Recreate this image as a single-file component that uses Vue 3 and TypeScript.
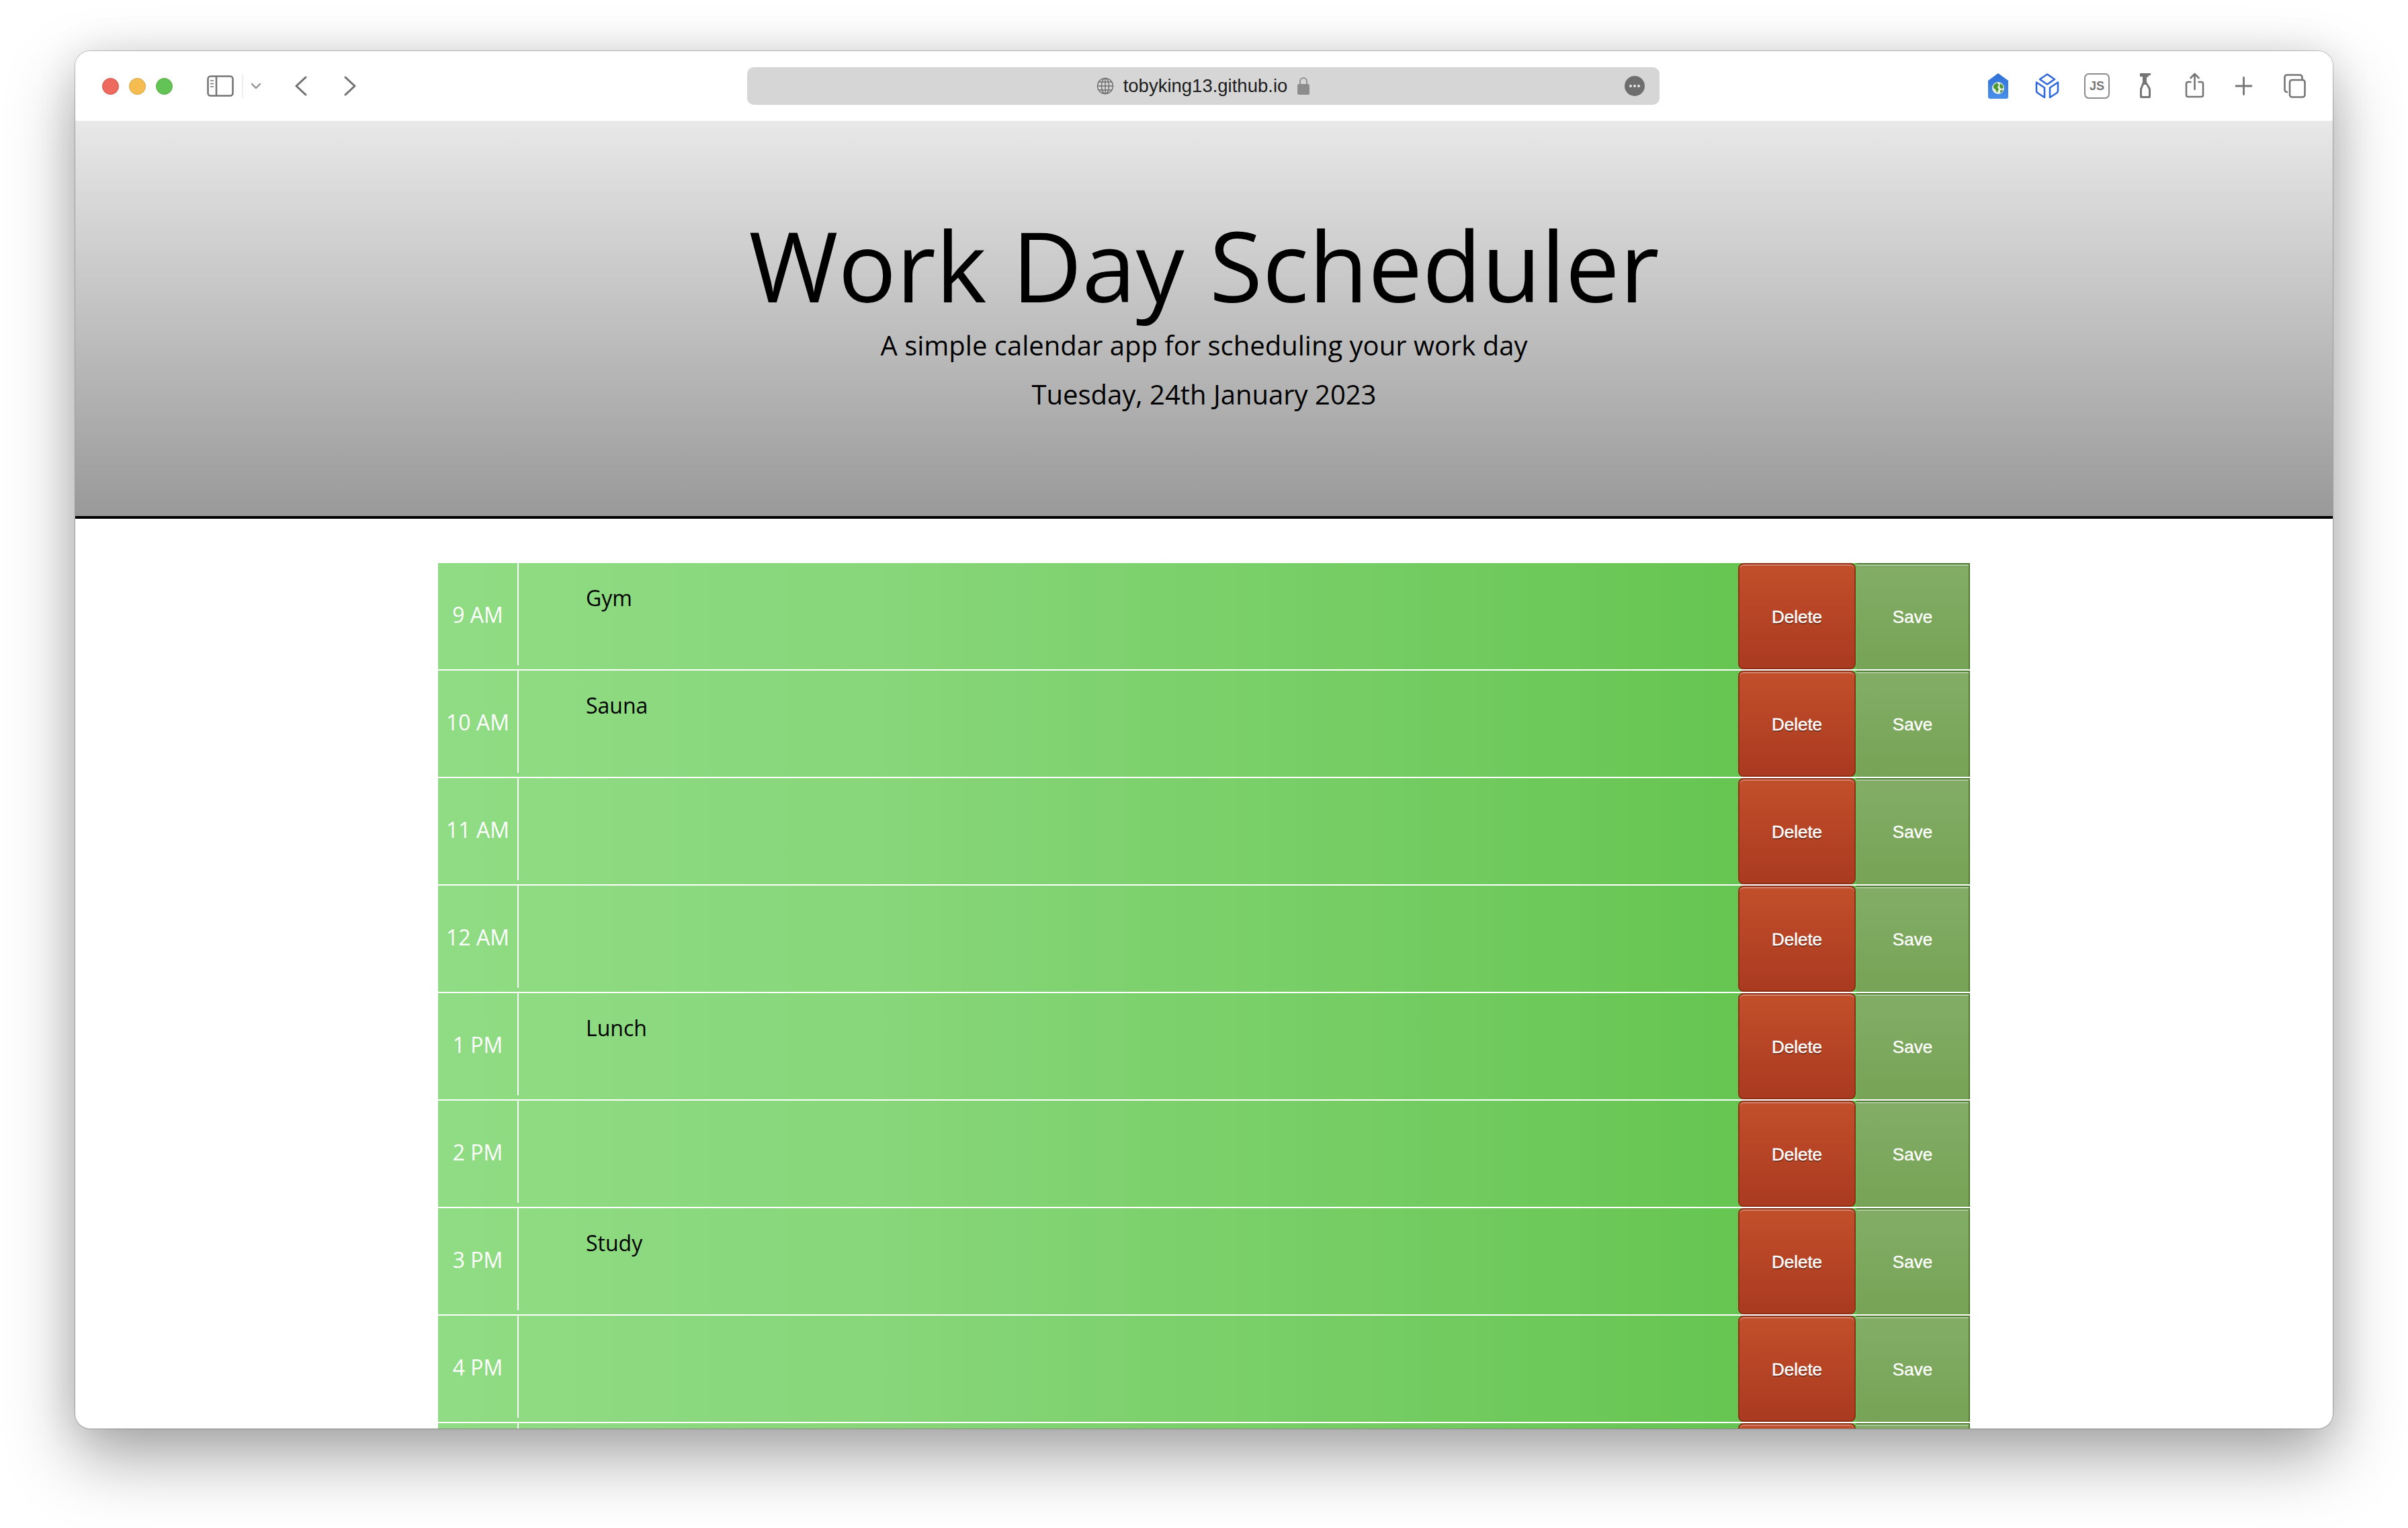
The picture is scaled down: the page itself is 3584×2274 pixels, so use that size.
<template>
  <div class="window">
    <div class="toolbar">
      <div class="tools-left">
        <span class="light red"></span>
        <span class="light yellow"></span>
        <span class="light green"></span>
        <svg class="ico sidebar" width="40" height="32" viewBox="0 0 40 32" fill="none" stroke="#757575" stroke-width="2.6">
          <rect x="1.5" y="1.5" width="37" height="29" rx="4" />
          <path d="M14 1.5v29" />
          <path d="M5 8h5M5 12.5h5M5 17h5" stroke-width="1.6" />
        </svg>
        <span class="divider"></span>
        <svg class="ico chevron" width="16" height="10" viewBox="0 0 16 10" fill="none" stroke="#8e8e93" stroke-width="2.4" stroke-linecap="round" stroke-linejoin="round">
          <path d="M2 2l6 6 6-6" />
        </svg>
        <svg class="ico back" width="18" height="30" viewBox="0 0 18 30" fill="none" stroke="#6f6f6f" stroke-width="3" stroke-linecap="round" stroke-linejoin="round">
          <path d="M16 2L2 15l14 13" />
        </svg>
        <svg class="ico forward" width="18" height="30" viewBox="0 0 18 30" fill="none" stroke="#6f6f6f" stroke-width="3" stroke-linecap="round" stroke-linejoin="round">
          <path d="M2 2l14 13L2 28" />
        </svg>
      </div>

      <div class="address">
        <div class="address-mid">
          <svg width="26" height="26" viewBox="0 0 26 26" fill="none" stroke="#707070" stroke-width="1.5">
            <circle cx="13" cy="13" r="11.5" />
            <ellipse cx="13" cy="13" rx="5.5" ry="11.5" />
            <path d="M13 1.5v23M1.5 13h23M3.5 7h19M3.5 19h19" />
          </svg>
          <span class="url">tobyking13.github.io</span>
          <svg width="20" height="28" viewBox="0 0 20 28" fill="none">
            <path d="M5 12V7a5 5 0 0 1 10 0v5" stroke="#929292" stroke-width="2" />
            <rect x="1" y="11" width="18" height="16" rx="2.5" fill="#8c8c8c" />
          </svg>
        </div>
        <span class="more"><i></i><i></i><i></i></span>
      </div>

      <div class="tools-right">
        <svg width="30" height="38" viewBox="0 0 30 38">
          <defs>
            <linearGradient id="houseFill" x1="0" y1="0" x2="0" y2="1">
              <stop offset="0" stop-color="#2f6fd8" />
              <stop offset="1" stop-color="#4a90ea" />
            </linearGradient>
          </defs>
          <path d="M15 0L30 11v24a3 3 0 0 1-3 3H3a3 3 0 0 1-3-3V11z" fill="url(#houseFill)" />
          <circle cx="15" cy="22" r="9" fill="#e8efe6" />
          <path d="M8 18l5-4 3 3-2 4 2 3-3 5-2-5-3-2zM18 15l4 3 1 4-4 1-2-3zM18 26l4-2-1 4-3 1z" fill="#4f9a2e" />
        </svg>
        <svg class="cube" width="36" height="38" viewBox="0 0 36 38" fill="none" stroke="#2f68dc" stroke-width="2.6" stroke-linejoin="round">
          <path d="M18 1.5l11 7.5-11 7.5L7 9z" />
          <path d="M2 13.5l12 8V36L4 29.500q-2-1.300-2-3.500z" />
          <path d="M34 13.500l-12 8V36l10-6.500q2-1.300 2-3.500z" />
        </svg>
        <span class="js-badge">JS</span>
        <svg class="bottle" width="16" height="38" viewBox="0 0 16 38" fill="none">
          <path d="M0 0h16v3h-3v2h-2l1 1h-2v7l5 8q1 2 1 3v11a2 2 0 0 1-2 2H2a2 2 0 0 1-2-2V24q0-2 1-3l3-8V5H0z" fill="#757575" />
          <path d="M3 25q0-2 3-8h3q4 6 4 8v8a1 1 0 0 1-1 1H4a1 1 0 0 1-1-1z" fill="#fff" />
        </svg>
        <svg class="share" width="29" height="38" viewBox="0 0 28 38" fill="none" stroke="#757575" stroke-width="2.6" stroke-linecap="round" stroke-linejoin="round">
          <path d="M8 14H4a2.500 2.500 0 0 0-2.500 2.500v17A2.500 2.500 0 0 0 4 36h20a2.500 2.500 0 0 0 2.500-2.500v-17A2.500 2.500 0 0 0 24 14h-4" />
          <path d="M14 25V2M8 8l6-6 6 6" />
        </svg>
        <svg class="plus" width="27" height="28" viewBox="0 0 26 28" fill="none" stroke="#757575" stroke-width="2.8" stroke-linecap="round">
          <path d="M13 1.500v25M1.500 14h23" />
        </svg>
        <svg class="tabs" width="35" height="36" viewBox="0 0 33 36" fill="none" stroke="#757575" stroke-width="2.6">
          <path d="M6 27H5a3.500 3.500 0 0 1-3.500-3.500V5A3.500 3.500 0 0 1 5 1.500h19A3.500 3.500 0 0 1 27.500 5v3" />
          <rect x="9" y="9" width="22.500" height="25.500" rx="3.500" />
        </svg>
      </div>
    </div>

    <header class="hero">
      <h1>Work Day Scheduler</h1>
      <p class="lead">A simple calendar app for scheduling your work day</p>
      <p class="today">Tuesday, 24th January 2023</p>
    </header>

    <main class="planner">
      <div v-for="row in rows" :key="row.hour" class="row">
        <div class="hour">{{ row.hour }}</div>
        <textarea class="note" :value="row.note"></textarea>
        <button class="btn del">Delete</button>
        <button class="btn save">Save</button>
      </div>
    </main>
  </div>
</template>

<script setup lang="ts">
const rows = [
  { hour: '9 AM', note: 'Gym' },
  { hour: '10 AM', note: 'Sauna' },
  { hour: '11 AM', note: '' },
  { hour: '12 AM', note: '' },
  { hour: '1 PM', note: 'Lunch' },
  { hour: '2 PM', note: '' },
  { hour: '3 PM', note: 'Study' },
  { hour: '4 PM', note: '' },
  { hour: '5 PM', note: '' },
]
</script>

<style>
body {
  background: #fff;
  height: 2274px;
  overflow: hidden;
}
</style>

<style scoped>
.window {
  width: 3360px;
  height: 2050px;
  margin: 76px 112px 0;
  border-radius: 22px;
  background: #fff;
  overflow: hidden;
  box-shadow: 0 0 0 1px rgba(0, 0, 0, 0.22), 0 44px 100px rgba(0, 0, 0, 0.34), 0 0 60px rgba(0, 0, 0, 0.1);
  font-family: "Open Sans", sans-serif;
}
.toolbar {
  height: 104px;
  display: grid;
  grid-template-columns: 1000px 1358px 1fr;
  align-items: center;
  background: #fff;
}
.tools-left {
  display: flex;
  align-items: center;
  padding-left: 40px;
}
.light {
  width: 25px;
  height: 25px;
  border-radius: 50%;
  margin-right: 15px;
  box-sizing: border-box;
}
.red { background: #ee6a5f; border: 1px solid #ce5347; }
.yellow { background: #f5bd4f; border: 1px solid #d6a243; }
.green { background: #61c455; border: 1px solid #58a942; }
.sidebar { margin-left: 36px; }
.divider {
  width: 2px;
  height: 36px;
  margin-left: 12px;
  background: #efefef;
}
.chevron { margin-left: 11px; }
.back { margin-left: 50px; }
.forward { margin-left: 55px; }
.address {
  height: 56px;
  position: relative;
  display: flex;
  align-items: center;
  justify-content: center;
  background: #d6d6d6;
  border-radius: 10px;
}
.address-mid {
  display: flex;
  align-items: center;
  gap: 14px;
}
.url {
  font-family: "Liberation Sans", sans-serif;
  font-size: 27.5px;
  color: #1c1c1c;
}
.more {
  position: absolute;
  right: 22px;
  top: 13px;
  width: 30px;
  height: 30px;
  border-radius: 50%;
  background: #6e6e6e;
  display: flex;
  align-items: center;
  justify-content: center;
  gap: 2px;
}
.more i {
  width: 4px;
  height: 4px;
  border-radius: 50%;
  background: #e6e6e6;
}
.tools-right {
  display: flex;
  align-items: center;
  padding-left: 489px;
}
.tools-right svg { flex: none; }
.cube { margin-left: 40px; }
.js-badge {
  width: 38px;
  height: 38px;
  margin-left: 37px;
  box-sizing: border-box;
  border: 2px solid #8a8a8a;
  border-radius: 7px;
  display: flex;
  align-items: center;
  justify-content: center;
  font-family: "Liberation Sans", sans-serif;
  font-weight: 700;
  font-size: 18px;
  color: #757575;
}
.bottle { margin-left: 45px; }
.share { margin-left: 51px; margin-bottom: 3px; }
.plus { margin-left: 45px; }
.tabs { margin-left: 45px; }

.hero {
  height: 592px;
  box-sizing: border-box;
  padding-top: 128px;
  text-align: center;
  color: #000;
  background: linear-gradient(#e8e8e8, #999);
  border-bottom: 4px solid #000;
}
h1 {
  margin: 0;
  font-size: 144px;
  font-weight: 400;
  line-height: 172px;
}
.lead {
  margin: 4px 0 0;
  font-size: 40px;
  line-height: 60px;
}
.today {
  margin: 13px 0 0;
  font-size: 40px;
  line-height: 60px;
}
.planner {
  width: 2280px;
  margin: 66px auto 0;
}
.row {
  display: flex;
  height: 158px;
  margin-bottom: 2px;
  background: linear-gradient(to right, #90dc84, #87d679 30%, #60c24a 95%);
}
.hour {
  flex: none;
  width: 118px;
  height: 152px;
  border-right: 2px solid #fff;
  display: flex;
  align-items: center;
  justify-content: center;
  font-size: 32px;
  color: #fff;
}
.note {
  flex: 1;
  min-width: 0;
  box-sizing: border-box;
  padding: 28px 0 0 100px;
  border: none;
  outline: none;
  resize: none;
  background: transparent;
  font-family: "Open Sans", sans-serif;
  font-size: 32px;
  line-height: 48px;
  color: #000;
}
.btn {
  flex: none;
  box-sizing: border-box;
  height: 158px;
  font-family: "Liberation Sans", sans-serif;
  font-size: 26px;
  color: #fff;
  padding: 2px 0 0;
  -webkit-text-stroke: 0.4px #fff;
}
.del {
  width: 175px;
  margin-right: 1px;
  border: 2px solid #8f2f18;
  border-radius: 8px;
  background: linear-gradient(#c24f2b, #aa3a20);
  box-shadow: inset 0 2px 0 rgba(255, 255, 255, 0.3);
  text-shadow: 0 2px 0 rgba(0, 0, 0, 0.4);
}
.save {
  width: 169px;
  padding-top: 0;
  border: 2px solid #4c7a2e;
  border-left: none;
  border-bottom: none;
  background: linear-gradient(#83ad66, #76a356);
  box-shadow: inset 0 2px 0 rgba(255, 255, 255, 0.35);
}
</style>
